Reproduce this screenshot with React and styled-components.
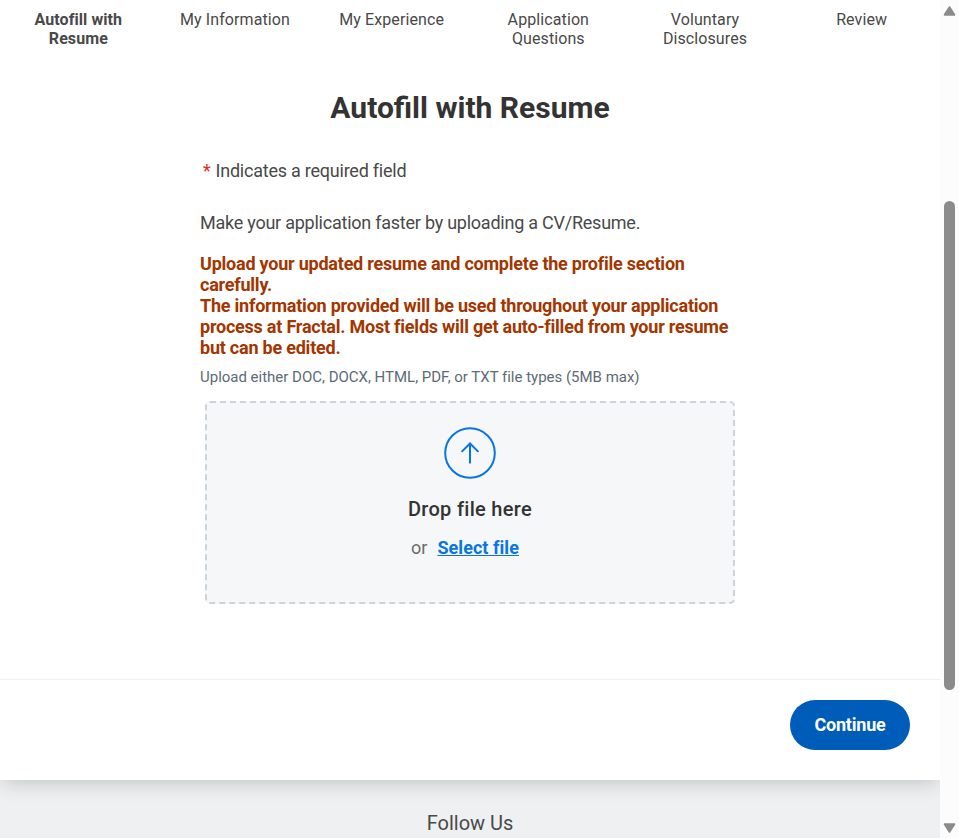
import React from 'react';
import styled, { createGlobalStyle } from 'styled-components';

const GlobalStyle = createGlobalStyle`
  *, *::before, *::after { box-sizing: border-box; }
  body {
    margin: 0;
    overflow: hidden;
    background: #fff;
    font-family: Roboto, 'Liberation Sans', sans-serif;
    color: #494949;
  }
`;

const Window = styled.div`
  display: grid;
  grid-template-columns: 940px 19px;
  width: 959px;
  height: 838px;
  overflow: hidden;
`;

const Page = styled.div`
  display: flex;
  flex-direction: column;
  height: 838px;
  overflow: hidden;
  background: #eff0f2;
`;

const Card = styled.main`
  display: flex;
  flex-direction: column;
  flex: none;
  height: 780px;
  background: #fff;
  box-shadow: 0 6px 18px -3px rgba(31, 46, 46, 0.22);
`;

const Steps = styled.ol`
  display: grid;
  grid-template-columns: repeat(6, 1fr);
  height: 48px;
  margin: 0;
  padding: 10px 0 0;
  list-style: none;
`;

const Step = styled.li`
  display: flex;
  justify-content: center;
  padding: 0 20px;
  font-size: 16px;
  line-height: 19px;
  letter-spacing: ${({ $active }) => ($active ? '0.08px' : '0.1px')};
  font-weight: ${({ $active }) => ($active ? 700 : 400)};
  text-align: center;
`;

const Content = styled.section`
  display: flex;
  flex-direction: column;
  width: 540px;
  height: 631px;
  margin: 0 auto;
`;

const Title = styled.h2`
  margin: 42px 0 0;
  font-size: 30px;
  line-height: 36px;
  font-weight: 700;
  text-align: center;
  color: #333;
`;

const Required = styled.p`
  display: flex;
  gap: 5px;
  margin: 34px 0 0;
  padding-left: 3px;
  font-size: 18px;
  line-height: 21px;
  letter-spacing: -0.23px;
`;

const Asterisk = styled.span`
  color: #de2e21;
`;

const Intro = styled.p`
  margin: 31px 0 0;
  font-size: 18px;
  line-height: 21px;
  letter-spacing: -0.24px;
`;

const Notice = styled.p`
  margin: 20px 0 0;
  font-size: 18px;
  line-height: 21px;
  font-weight: 700;
  letter-spacing: -0.225px;
  color: #a33600;
`;

const Hint = styled.p`
  margin: 10px 0 0;
  font-size: 15px;
  line-height: 18px;
  letter-spacing: -0.01px;
  color: #5e6a75;
`;

const DropZone = styled.div`
  display: flex;
  flex-direction: column;
  align-items: center;
  height: 203px;
  margin: 15px 5px 0;
  padding-top: 24px;
  border: 2px dashed #ced3d9;
  border-radius: 5px;
  background: #f6f7f9;
`;

const UploadIcon = styled.svg`
  display: block;
  width: 52px;
  height: 52px;
  fill: none;
  stroke: #0875e1;
  stroke-width: 2;
`;

const DropLabel = styled.div`
  margin-top: 18px;
  font-size: 20px;
  line-height: 24px;
  font-weight: 500;
  letter-spacing: 0.3px;
  color: #333;
`;

const SelectRow = styled.div`
  display: flex;
  gap: 10px;
  margin-top: 16px;
  padding-right: 10px;
  font-size: 18px;
  line-height: 21px;
  color: #6b6b6b;
`;

const SelectLink = styled.a`
  font-weight: 700;
  letter-spacing: 0.06px;
  color: #0875e1;
  text-decoration: underline;
`;

const Footer = styled.footer`
  display: flex;
  justify-content: flex-end;
  align-items: flex-start;
  flex: 1;
  padding: 20px 30px 0;
  border-top: 1px solid #eeeff0;
`;

const ContinueButton = styled.button`
  width: 120px;
  height: 50px;
  padding: 0 0 2px;
  border: 0;
  border-radius: 25px;
  background: #005cb9;
  color: #fff;
  font: 700 18px/21px Roboto, sans-serif;
  letter-spacing: -0.2px;
`;

const FollowUs = styled.div`
  padding-top: 31px;
  font-size: 20px;
  line-height: 24px;
  text-align: center;
`;

const ScrollTrack = styled.div`
  display: flex;
  flex-direction: column;
  align-items: center;
  justify-content: space-between;
  height: 838px;
  padding: 6px 0 5px;
  background: #fcfcfc;
`;

const ScrollArrow = styled.svg`
  display: block;
  width: 13px;
  height: 10px;
  fill: #8b8b8b;
  stroke: #8b8b8b;
  stroke-linejoin: round;
  stroke-width: 2;
`;

const ScrollSpace = styled.div`
  flex: 1;
  padding-top: 185px;
`;

const ScrollThumb = styled.div`
  width: 11px;
  height: 489px;
  border-radius: 6px;
  background: #8b8b8b;
`;

const STEPS = [
  'Autofill with Resume',
  'My Information',
  'My Experience',
  'Application Questions',
  'Voluntary Disclosures',
  'Review',
];

export default function App() {
  return (
    <>
      <GlobalStyle />
      <Window>
        <Page>
          <Card>
            <Steps>
              {STEPS.map((label, i) => (
                <Step key={label} $active={i === 0}>{label}</Step>
              ))}
            </Steps>
            <Content>
              <Title>Autofill with Resume</Title>
              <Required><Asterisk>*</Asterisk>Indicates a required field</Required>
              <Intro>Make your application faster by uploading a CV/Resume.</Intro>
              <Notice>
                Upload your updated resume and complete the profile section carefully.
                <br />
                The information provided will be used throughout your application process at
                Fractal. Most fields will get auto-filled from your resume but can be edited.
              </Notice>
              <Hint>Upload either DOC, DOCX, HTML, PDF, or TXT file types (5MB max)</Hint>
              <DropZone>
                <UploadIcon viewBox="0 0 52 52">
                  <circle cx="26" cy="26" r="24.8" />
                  <path d="M26 36.5V16.5M17.6 24.9L26 16.5L34.4 24.9" />
                </UploadIcon>
                <DropLabel>Drop file here</DropLabel>
                <SelectRow>
                  <span>or</span>
                  <SelectLink>Select file</SelectLink>
                </SelectRow>
              </DropZone>
            </Content>
            <Footer>
              <ContinueButton>Continue</ContinueButton>
            </Footer>
          </Card>
          <FollowUs>Follow Us</FollowUs>
        </Page>
        <ScrollTrack>
          <ScrollArrow viewBox="0 0 13 10"><path d="M6.5 1.2L11.3 8.8H1.7Z" /></ScrollArrow>
          <ScrollSpace><ScrollThumb /></ScrollSpace>
          <ScrollArrow viewBox="0 0 13 10"><path d="M6.5 8.8L11.3 1.2H1.7Z" /></ScrollArrow>
        </ScrollTrack>
      </Window>
    </>
  );
}
